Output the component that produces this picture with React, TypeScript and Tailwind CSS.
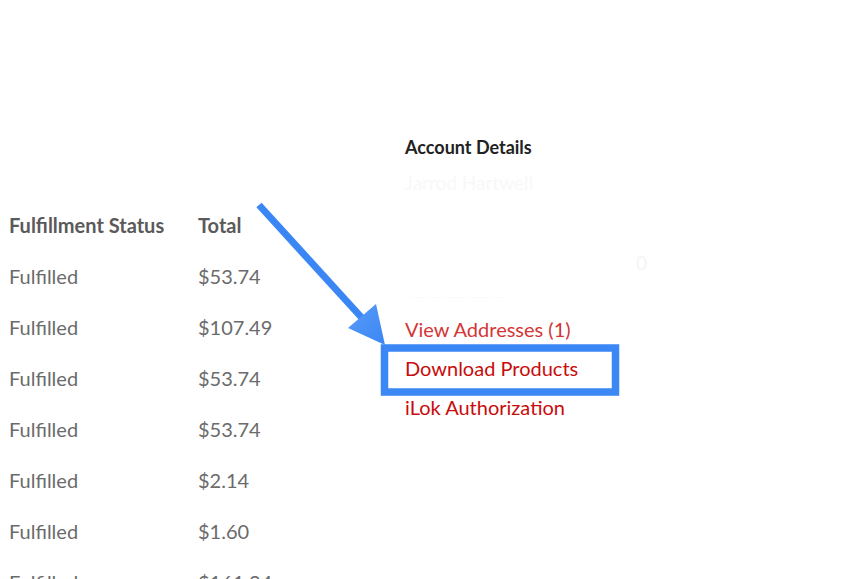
import React from "react";

const rows: [string, string][] = [
    ["Fulfilled", "$53.74"],
    ["Fulfilled", "$107.49"],
    ["Fulfilled", "$53.74"],
    ["Fulfilled", "$53.74"],
    ["Fulfilled", "$2.14"],
    ["Fulfilled", "$1.60"],
    ["Fulfilled", "$161.24"],
];

const OrdersTable: React.FC = () => (
    <div className="w-[405px] shrink-0 pl-[9px] pt-[199px]">
        <div className="flex h-[51px] items-center text-[20px] font-bold text-[#5a5a5a]">
            <span className="w-[189px]">Fulfillment Status</span>
            <span>Total</span>
        </div>
        {rows.map(([status, total], i) => (
            <div key={i} className="flex h-[51px] items-center text-[20px] text-[#6b6b6b]">
                <span className="w-[189px]">{status}</span>
                <span>{total}</span>
            </div>
        ))}
    </div>
);

const AccountDetails: React.FC = () => (
    <div className="w-[242px] pt-[136px]">
        <h2 className="text-[18px] leading-[22px] font-bold text-[#222]">Account Details</h2>
        <p className="mt-[13px] text-[19px] leading-[24px] text-[#f8f8f8]">Jarrod Hartwell</p>
        <p className="mt-[56px] text-right text-[19px] leading-[24px] text-[#f5f5f5]">0</p>
        <p className="mt-[14px] text-[10px] leading-[14px] text-[#f8f8f8]">-- ---- --- ------ ----- ----</p>
        <div className="mt-[7px] flex flex-col text-[20px] leading-[39px]">
            <a className="text-[#d33636]">View Addresses (1)</a>
            <a className="text-[#c80c0c]">Download Products</a>
            <a className="text-[#c80c0c]">iLok Authorization</a>
        </div>
    </div>
);

export default function App() {
    return (
        <div className="relative h-[579px] w-[845px] overflow-hidden bg-white font-['Lato',sans-serif]">
            <div className="flex">
                <OrdersTable/>
                <AccountDetails/>
            </div>
            {/* annotation overlay */}
            <svg className="pointer-events-none absolute inset-0" width="845" height="579">
                <defs>
                    <linearGradient id="head" x1="0" y1="0" x2="1" y2="1">
                        <stop offset="0" stopColor="#5a9cf7"/>
                        <stop offset="1" stopColor="#3a86f5"/>
                    </linearGradient>
                </defs>
                <line x1="259" y1="205" x2="362" y2="318" stroke="#3b86f5" strokeWidth="7"/>
                <polygon points="348,328 376,304 385,345" fill="url(#head)"/>
                <rect x="384.5" y="348" width="231" height="44" fill="none" stroke="#3b87f5" strokeWidth="7.5"/>
            </svg>
        </div>
    );
}
